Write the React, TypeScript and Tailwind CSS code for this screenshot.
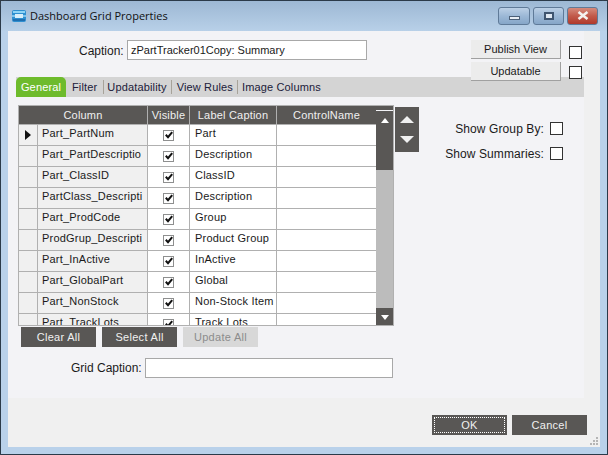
import React from "react";

const rows: [string, string][] = [
  ["Part_PartNum", "Part"],
  ["Part_PartDescriptio", "Description"],
  ["Part_ClassID", "ClassID"],
  ["PartClass_Descripti", "Description"],
  ["Part_ProdCode", "Group"],
  ["ProdGrup_Descripti", "Product Group"],
  ["Part_InActive", "InActive"],
  ["Part_GlobalPart", "Global"],
  ["Part_NonStock", "Non-Stock Item"],
  ["Part_TrackLots", "Track Lots"],
];

function Check() {
  return (
    <span className="w-[11px] h-[11px] border border-[#8e8f8f] bg-white flex items-center justify-center">
      <svg width="8" height="8" viewBox="0 0 8 8">
        <path d="M0.8 3.8 L3 6.2 L7.2 1.2" fill="none" stroke="#111" strokeWidth="2" />
      </svg>
    </span>
  );
}

function Box() {
  return <span className="block shrink-0 w-[13px] h-[13px] border border-[#333] bg-white" />;
}

function Dark({ w, label, focus }: { w: string; label: string; focus?: boolean }) {
  return (
    <button className={`${w} h-[20px] bg-[#595755] text-[#f0f0f0] text-[11px] tracking-[0.3px] flex items-center justify-center p-[3px]`}>
      <span className={`w-full h-full flex items-center justify-center ${focus ? "outline outline-1 outline-dotted outline-white" : ""}`}>{label}</span>
    </button>
  );
}

function Sep({ className }: { className: string }) {
  return <span className={`block shrink-0 w-px h-[14px] bg-[#a7a39a] ${className}`} />;
}

function WinBtn({ w, red, children }: { w: string; red?: boolean; children: React.ReactNode }) {
  return (
    <div className={`${w} h-[18px] rounded-[3px] border border-[#5f7a98] flex items-center justify-center ${red ? "bg-gradient-to-b from-[#d58a7c] via-[#c25a4a] to-[#b0392b]" : "bg-gradient-to-b from-[#bcd0e6] via-[#9cb8d6] to-[#86a6c8]"}`}>
      {children}
    </div>
  );
}

export default function App() {
  return (
    <div className="w-[608px] h-[455px] overflow-hidden bg-[#2f3b46]" style={{ fontFamily: '"Liberation Sans", Arial, sans-serif' }}>
      <div className="w-full h-full border border-[#2b3a49] rounded-t-[6px] bg-[#b9d1ea] flex flex-col text-[12px] text-[#1a1a1a]">
        <div className="h-[30px] shrink-0 flex items-center pl-[10px] pr-[9px] bg-gradient-to-b from-[#9db8d4] to-[#b8d0e8]">
          <svg width="16" height="14" viewBox="0 0 16 14" className="mr-[3px]">
            <rect x="1" y="1" width="14" height="12" rx="2" fill="#2f8fd0" />
            <rect x="2" y="2" width="12" height="2" fill="#8fd4f5" />
            <rect x="1" y="6" width="14" height="2" fill="#7cc4ec" />
            <rect x="4" y="5" width="8" height="4" fill="#d8eefa" />
            <rect x="2" y="10" width="12" height="2" fill="#1f6fb0" />
          </svg>
          <span className="text-[11px] text-[#111]" style={{ fontFamily: '"Open Sans", sans-serif' }}>Dashboard Grid Properties</span>
          <div className="ml-auto flex gap-[3px] mb-[1px]">
            <WinBtn w="w-[32px]"><span className="w-[11px] h-[4px] bg-[#e8eef5] border border-[#4c6078] mt-[5px]" /></WinBtn>
            <WinBtn w="w-[31px]"><span className="w-[10px] h-[8px] border-2 border-[#3f5570] bg-[#dfe8f2]" /></WinBtn>
            <WinBtn w="w-[31px]" red>
              <svg width="12" height="9" viewBox="0 0 12 9"><path d="M1.5 1 L10.5 8 M10.5 1 L1.5 8" stroke="#f4f1ee" strokeWidth="2.6" /></svg>
            </WinBtn>
          </div>
        </div>

        <div className="flex-1 mx-[7px] mb-[7px] bg-[#f0f0f0] flex flex-col">
          <div className="w-[576px] h-[367px] bg-[#f3f3f6] flex flex-col shrink-0">
            <div className="h-[46px] shrink-0 flex items-start relative z-10">
              <span className="ml-[71px] mt-[11px] w-[48px] text-[12px]">Caption:</span>
              <div className="mt-[9px] w-[240px] h-[20px] bg-white border border-[#a8a8a8] px-[3px] text-[11px] flex items-center">zPartTracker01Copy: Summary</div>
              <div className="ml-[104px] mt-[9px] flex flex-col gap-[3px]">
                <div className="w-[90px] h-[19px] shrink-0 bg-[#ececec] border-b border-r border-[#a0a0a0] flex items-center justify-center text-[11px]">Publish View</div>
                <div className="w-[90px] h-[19px] shrink-0 bg-[#ececec] border-b border-r border-[#a0a0a0] flex items-center justify-center text-[11px]">Updatable</div>
              </div>
              <div className="ml-[8px] mt-[15px] flex flex-col gap-[7px]">
                <Box />
                <Box />
              </div>
            </div>
            <div className="ml-[8px] w-[568px] h-[20px] shrink-0 bg-[#d4d4d4] flex items-center text-[11px] tracking-[0.15px] text-[#20203a]">
              <div className="w-[50px] h-full flex items-center justify-center bg-[#6ebb2c] text-white rounded-t-[5px]">General</div>
              <span className="ml-[6px]">Filter</span>
              <Sep className="ml-[6px]" />
              <span className="ml-[3px]">Updatability</span>
              <Sep className="ml-[4px]" />
              <span className="ml-[5px]">View Rules</span>
              <Sep className="ml-[4px]" />
              <span className="ml-[4px]">Image Columns</span>
            </div>

            <div className="mt-[8px] ml-[10px] flex">
              <div className="w-[376px] h-[221px] border border-[#b0b0b0] overflow-hidden flex bg-white text-[11px] tracking-[0.2px]">
                <div className="w-[357px] shrink-0">
                  <div className="flex h-[19px] bg-[#595755] text-[#f0f0f0] border-b border-[#b0b0b0]">
                    <div className="w-[129px] flex items-center justify-center border-r border-[#b0b0b0]">Column</div>
                    <div className="w-[42px] flex items-center justify-center border-r border-[#b0b0b0]">Visible</div>
                    <div className="w-[87px] flex items-center justify-center border-r border-[#b0b0b0]">Label Caption</div>
                    <div className="w-[99px] flex items-center justify-center">ControlName</div>
                  </div>
                  {rows.map(([c, l], i) => (
                    <div key={c} className="flex h-[21px] border-b border-[#b0b0b0] shrink-0">
                      <div className="w-[19px] bg-[#f0f0f0] border-r border-[#b0b0b0] flex items-center justify-center">
                        {i === 0 && <svg width="6" height="10" viewBox="0 0 6 10"><path d="M0 0 L6 5 L0 10 Z" fill="#111" /></svg>}
                      </div>
                      <div className="w-[110px] bg-[#f0f0f0] border-r border-[#b0b0b0] pl-[4px] whitespace-nowrap overflow-hidden">{c}</div>
                      <div className="w-[42px] border-r border-[#b0b0b0] flex items-center justify-center"><Check /></div>
                      <div className="w-[87px] border-r border-[#b0b0b0] pl-[5px] whitespace-nowrap overflow-hidden">{l}</div>
                      <div className="w-[99px]" />
                    </div>
                  ))}
                </div>
                <div className="w-[17px] bg-[#bcbcbc] flex flex-col">
                  <div className="h-[5px] border-b border-[#f3f3f6] bg-[#595755]" />
                  <div className="h-[59px] bg-[#595755] flex justify-center pt-[7px]">
                    <svg width="8" height="5" viewBox="0 0 8 5"><path d="M4 0 L8 5 L0 5 Z" fill="#fff" /></svg>
                  </div>
                  <div className="mt-auto h-[17px] bg-[#595755] flex justify-center pt-[7px]">
                    <svg width="8" height="5" viewBox="0 0 8 5"><path d="M0 0 L8 0 L4 5 Z" fill="#fff" /></svg>
                  </div>
                </div>
              </div>
              <div className="ml-[1px] mt-[2px] w-[24px] h-[45px] bg-[#595755] flex flex-col items-center justify-between py-[9px]">
                <svg width="14" height="7" viewBox="0 0 14 7"><path d="M7 0 L14 7 L0 7 Z" fill="#f0f0f0" /></svg>
                <svg width="14" height="7" viewBox="0 0 14 7"><path d="M0 0 L14 0 L7 7 Z" fill="#f0f0f0" /></svg>
              </div>
              <div className="ml-[24px] w-[120px] mt-[17px] flex flex-col items-end gap-[12px] text-[12px] tracking-[0.1px]">
                <div className="h-[13px] flex items-center gap-[6px] whitespace-nowrap"><span>Show Group By:</span><Box /></div>
                <div className="h-[13px] flex items-center gap-[6px] whitespace-nowrap"><span>Show Summaries:</span><Box /></div>
              </div>
            </div>

            <div className="ml-[13px] mt-[1px] flex gap-[6px]">
              <Dark w="w-[75px]" label="Clear All" />
              <Dark w="w-[75px]" label="Select All" />
              <button className="w-[75px] h-[20px] bg-[#d8d8d8] text-[#8c8c8c] text-[11px] tracking-[0.3px]">Update All</button>
            </div>

            <div className="mt-[11px] flex items-center">
              <span className="ml-[63px] w-[74px] text-[12px]">Grid Caption:</span>
              <div className="w-[248px] h-[20px] bg-white border border-[#a8a8a8]" />
            </div>
          </div>

          <div className="mt-[17px] mr-[13px] flex justify-end gap-[5px]">
            <Dark w="w-[75px]" label="OK" focus />
            <Dark w="w-[75px]" label="Cancel" />
          </div>
          <div className="flex justify-end mt-auto pr-[2px] pb-[2px]">
            <svg width="8" height="8" viewBox="0 0 8 8" fill="#b5b5b5">
              <rect x="6" y="0" width="2" height="2" />
              <rect x="3" y="3" width="2" height="2" />
              <rect x="6" y="3" width="2" height="2" />
              <rect x="0" y="6" width="2" height="2" />
              <rect x="3" y="6" width="2" height="2" />
              <rect x="6" y="6" width="2" height="2" />
            </svg>
          </div>
        </div>
      </div>
    </div>
  );
}
